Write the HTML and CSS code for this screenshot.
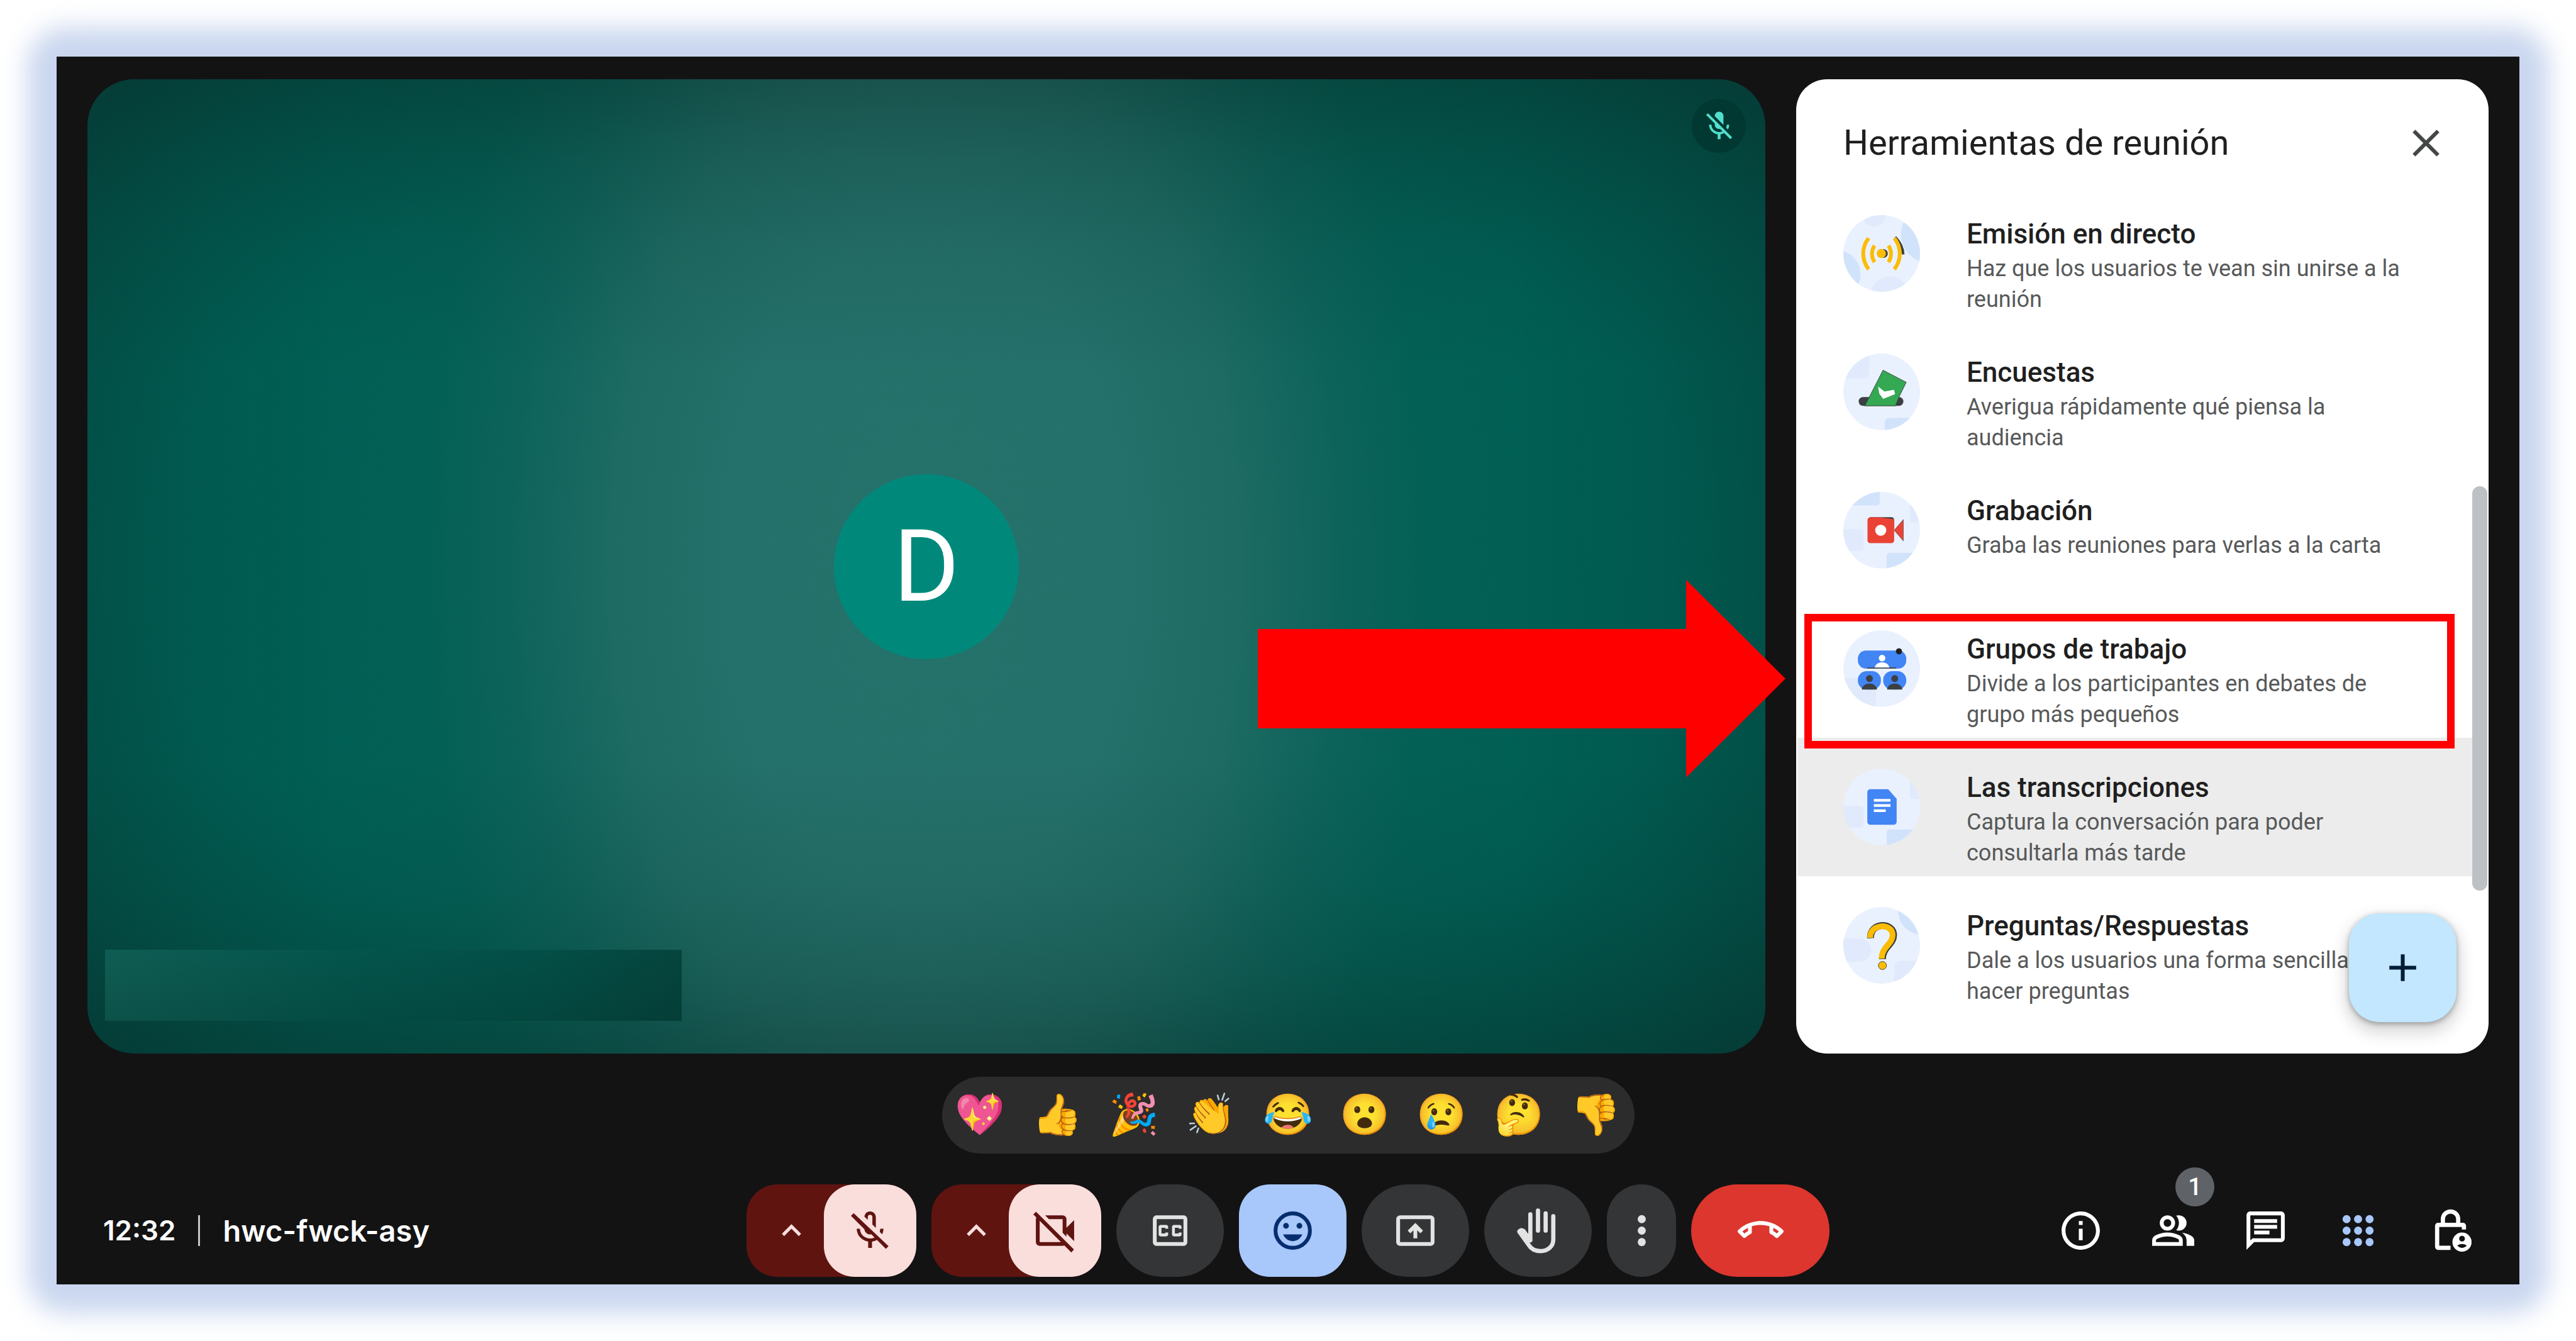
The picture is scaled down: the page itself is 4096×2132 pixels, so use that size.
FILE: index.html
```html
<!DOCTYPE html>
<html lang="es">
<head>
<meta charset="utf-8">
<meta name="viewport" content="width=device-width, initial-scale=1">
<title>Meet: hwc-fwck-asy</title>
<link rel="stylesheet" href="styles.css">
</head>
<body>
<div class="frame">
  <main class="stage">
    <section class="tile" aria-label="Participante">
      <span class="tile-mute">
        <svg viewBox="0 0 24 24" aria-hidden="true"><path d="M19 11h-1.700c0 .74-.16 1.430-.43 2.050l1.230 1.230c.56-.98.9-2.090.9-3.280zm-4.020.17c0-.06.02-.11.02-.17V5c0-1.660-1.340-3-3-3S9 3.340 9 5v.18l5.980 5.990zM4.270 3L3 4.270l6.010 6.010V11c0 1.660 1.330 3 2.990 3 .22 0 .44-.03.65-.08l1.660 1.660c-.71.33-1.500.52-2.310.52-2.760 0-5.300-2.100-5.300-5.100H5c0 3.410 2.720 6.230 6 6.720V21h2v-3.280c.91-.13 1.770-.45 2.540-.9L19.730 21 21 19.730 4.270 3z"/></svg>
      </span>
      <div class="avatar">D</div>
      <div class="name-cover"></div>
    </section>

    <aside class="panel">
      <header class="panel-head">
        <h1 class="panel-title">Herramientas de reunión</h1>
        <button class="close" type="button" aria-label="Cerrar">
          <svg viewBox="0 0 24 24" aria-hidden="true"><path d="M19 6.410L17.590 5 12 10.590 6.410 5 5 6.410 10.590 12 5 17.590 6.410 19 12 13.410 17.590 19 19 17.590 13.410 12z"/></svg>
        </button>
      </header>
      <ul class="tools">
        <li class="tool">
          <svg class="tool-icon" viewBox="0 0 40 40" aria-hidden="true">
            <circle cx="20" cy="20" r="20" fill="#eaf1fe"/>
            <g clip-path="url(#disc)">
              <circle cx="16" cy="0" r="6" fill="#e0eafc"/><circle cx="24" cy="42" r="10" fill="#e0eafc"/>
              <circle cx="45" cy="10" r="15" fill="#d1e3fb"/><circle cx="-4" cy="31" r="13" fill="#d1e3fb"/>
            </g>
            <path d="M27 11.500q4 4 4.200 9" fill="none" stroke="#3c4043" stroke-width="1.400"/>
            <circle cx="20.900" cy="20" r="2.300" fill="#3c4043"/><circle cx="19.800" cy="20" r="2.400" fill="#fbbc04"/>
            <path d="M13.200 12a13 13 0 0 0 0 16.200M16.300 15.900a7.500 7.500 0 0 0 0 8.600M26.600 12a13 13 0 0 1 0 16.200M23.500 15.900a7.500 7.500 0 0 1 0 8.600" fill="none" stroke="#fbbc04" stroke-width="2"/>
          </svg>
          <div class="tool-text"><h2>Emisión en directo</h2><p>Haz que los usuarios te vean sin unirse a la reunión</p></div>
        </li>
        <li class="tool">
          <svg class="tool-icon" viewBox="0 0 40 40" aria-hidden="true">
            <circle cx="20" cy="20" r="20" fill="#eaf1fe"/>
            <g clip-path="url(#disc)"><path d="M0 0h13.500v10a3 3 0 0 1-3 3H0z" fill="#e0eafc"/><path d="M21.500 40v-4a2.500 2.500 0 0 1 2.500-2.500h16V40z" fill="#d1e3fb"/></g>
            <rect x="8" y="22.700" width="23.300" height="4.600" rx="2.300" fill="#3c4043"/>
            <path d="M20.700 8.700l12.100 6.300-3.800 7.700-1.800 4.600H11.200z" fill="#34a853" stroke="#3c4043" stroke-width=".3"/>
            <path d="M18.500 17.800l2.900 2.300 4.800-.9.500 1.800-5.800 2.400-1.900-2.500z" fill="#fff" stroke="#fff" stroke-width=".5"/>
          </svg>
          <div class="tool-text"><h2>Encuestas</h2><p>Averigua rápidamente qué piensa la audiencia</p></div>
        </li>
        <li class="tool">
          <svg class="tool-icon" viewBox="0 0 40 40" aria-hidden="true">
            <circle cx="20" cy="20" r="20" fill="#eaf1fe"/>
            <g clip-path="url(#disc)"><path d="M0 0h19v5.500a1.600 1.600 0 0 1-1.600 1.600H0zM22.600 40v-6.700a1.600 1.600 0 0 1 1.600-1.600H40V40z" fill="#d1e3fb"/><path d="M0 19.400h9a1.600 1.600 0 0 1 1.600 1.600v8a1.800 1.800 0 0 1-1.800 1.800H0zM34.700 0H40v15.800h-4a1.300 1.300 0 0 1-1.300-1.300z" fill="#e0eafc"/></g>
            <rect x="13" y="13.200" width="13.500" height="6" rx="1.400" fill="#3c4043"/>
            <path d="M14 13.300h5l7.500 1v11a1.400 1.400 0 0 1-1.400 1.400H14a1.400 1.400 0 0 1-1.400-1.400V14.700A1.400 1.400 0 0 1 14 13.300z" fill="#ea4335"/>
            <path d="M31.300 14.400v11.200L26.500 20z" fill="#ea4335" stroke="#3c4043" stroke-width=".2"/><circle cx="19.500" cy="20" r="2.900" fill="#fff"/>
          </svg>
          <div class="tool-text"><h2>Grabación</h2><p>Graba las reuniones para verlas a la carta</p></div>
        </li>
        <li class="tool marked">
          <svg class="tool-icon" viewBox="0 0 40 40" aria-hidden="true">
            <circle cx="20" cy="20" r="20" fill="#eaf1fe"/>
            <g clip-path="url(#disc)"><path d="M0 24.800h15a2 2 0 0 1 2 2V40H0z" fill="#e0eafc"/></g>
            <rect x="7.600" y="10.600" width="25.200" height="9.400" rx="4.200" fill="#4285f4"/>
            <circle cx="29" cy="11" r="1.600"/><path d="M12.500 19.700h15" stroke="#3c4043" stroke-width=".6"/>
            <circle cx="20.200" cy="14.500" r="1.700" fill="#fff"/><path d="M16.400 19.400c.6-3.600 7-3.600 7.600 0z" fill="#fff"/>
            <rect x="7.600" y="21.300" width="12" height="9.600" rx="4.600" fill="#4285f4"/><rect x="20.800" y="21.300" width="12" height="9.600" rx="4.600" fill="#4285f4"/>
            <path d="M9.600 30.900c.4-4.200 7.600-4.200 8 0zM22.800 30.900c.4-4.200 7.600-4.200 8 0z" fill="#3c4043"/><circle cx="13.600" cy="25.200" r="1.800" fill="#3c4043"/><circle cx="26.800" cy="25.200" r="1.800" fill="#3c4043"/>
          </svg>
          <div class="tool-text"><h2>Grupos de trabajo</h2><p>Divide a los participantes en debates de grupo más pequeños</p></div>
          <svg class="arrow" viewBox="0 0 839 314" aria-hidden="true"><path d="M0 78h681V0l158 157-158 157v-78H0z" fill="#f00"/></svg>
        </li>
        <li class="tool hovered">
          <svg class="tool-icon" viewBox="0 0 40 40" aria-hidden="true">
            <circle cx="20" cy="20" r="20" fill="#eaf1fe"/>
            <g clip-path="url(#disc)"><path d="M22.600 40v-6.700a1.600 1.600 0 0 1 1.600-1.600H40V40z" fill="#d1e3fb"/><path d="M0 19.400h9a1.600 1.600 0 0 1 1.600 1.600v8a1.800 1.800 0 0 1-1.800 1.800H0zM34.700 0H40v15.800h-4a1.300 1.300 0 0 1-1.300-1.300z" fill="#e0eafc"/></g>
            <path d="M14.100 10.700h9.300l4.400 5v12a1.600 1.600 0 0 1-1.600 1.600H14.100a1.600 1.600 0 0 1-1.600-1.600V12.300a1.600 1.600 0 0 1 1.600-1.600z" fill="#4285f4"/>
            <path d="M15.900 16.500h8.700M15.900 19.200h8.700M15.900 21.900h6.200" stroke="#fff" stroke-width="1.400"/>
          </svg>
          <div class="tool-text"><h2>Las transcripciones</h2><p>Captura la conversación para poder consultarla más tarde</p></div>
        </li>
        <li class="tool">
          <svg class="tool-icon" viewBox="0 0 40 40" aria-hidden="true">
            <defs><clipPath id="disc"><circle cx="20" cy="20" r="20"/></clipPath></defs>
            <circle cx="20" cy="20" r="20" fill="#eaf1fe"/>
            <g clip-path="url(#disc)"><circle cx="41" cy="2" r="12.500" fill="#d1e3fb"/><rect x="-4" y="16.500" width="18.500" height="12" rx="6" fill="#e0eafc"/><path d="M26.500 40v-9a3 3 0 0 1 3-3H40v12z" fill="#e0eafc"/></g>
            <g fill="none"><path d="M14.200 16.300c-.6-8.400 12-8.700 12-1.600 0 5-5.800 6-5.800 12.500" stroke="#3c4043" stroke-width="3.600"/><path d="M14 16.100c-.4-7.600 11.700-8 11.700-1.500 0 4.900-5.700 6-5.700 12.400" stroke="#fbbc04" stroke-width="3"/></g>
            <circle cx="20.400" cy="30.500" r="2.100" fill="#fbbc04" stroke="#3c4043" stroke-width=".3"/>
          </svg>
          <div class="tool-text"><h2>Preguntas/Respuestas</h2><p>Dale a los usuarios una forma sencilla de hacer preguntas</p></div>
        </li>
      </ul>
      <div class="scroll-thumb"></div>
      <button class="fab" type="button" aria-label="Añadir"><svg viewBox="0 0 24 24" aria-hidden="true"><path d="M19 13h-6v6h-2v-6H5v-2h6V5h2v6h6v2z"/></svg></button>
    </aside>
  </main>

  <div class="reactions">
    <button type="button">💖</button><button type="button">👍</button><button type="button">🎉</button><button type="button">👏</button><button type="button">😂</button><button type="button">😮</button><button type="button">😢</button><button type="button">🤔</button><button type="button">👎</button>
  </div>

  <footer class="bar">
    <div class="meta"><span class="time">12:32</span><span class="rule"></span><span class="code">hwc-fwck-asy</span></div>
    <div class="controls">
      <div class="split">
        <button class="more-opts" type="button" aria-label="Ajustes de audio"><svg viewBox="0 0 24 24" aria-hidden="true"><path d="M12 8l-6 6 1.410 1.410L12 10.830l4.590 4.580L18 14z"/></svg></button>
        <button class="off" type="button" aria-label="Activar micrófono"><svg viewBox="0 0 24 24" aria-hidden="true"><path d="M10.800 4.900c0-.66.54-1.200 1.200-1.200s1.200.54 1.200 1.200l-.01 3.910L15 10.600V5c0-1.660-1.340-3-3-3-1.540 0-2.790 1.160-2.960 2.650l1.760 1.760V4.900zM19 11h-1.700c0 .58-.1 1.130-.27 1.640l1.270 1.270c.44-.88.7-1.870.7-2.910zM3.410 2.860L2 4.270l7 7c.2 1.500 1.400 2.730 3 2.730.23 0 .44-.03.65-.08l1.660 1.660c-.71.33-1.500.52-2.310.52-2.760 0-5.300-2.100-5.300-5.100H5c0 3.410 2.720 6.230 6 6.720V21h2v-3.280c.91-.13 1.770-.45 2.550-.9l4.700 4.700 1.410-1.410z"/></svg></button>
      </div>
      <div class="split">
        <button class="more-opts" type="button" aria-label="Ajustes de vídeo"><svg viewBox="0 0 24 24" aria-hidden="true"><path d="M12 8l-6 6 1.410 1.410L12 10.830l4.590 4.580L18 14z"/></svg></button>
        <button class="off" type="button" aria-label="Activar cámara"><svg viewBox="0 0 24 24" aria-hidden="true"><path d="m22 17.500-4-4v1.675L16 13.175V6H8.825l-2-2H16q.825 0 1.413.588T18 6v4.500l4-4v11ZM20.550 23.400.650 3.500 2.100 2.100l19.800 19.800-1.350 1.500ZM4 4l2 2H4v12h12v-2l2 2q0 .825-.587 1.413T16 20H4q-.825 0-1.412-.587T2 18V6q0-.825.588-1.412T4 4Z"/></svg></button>
      </div>
      <button class="ctl" type="button" aria-label="Subtítulos"><svg viewBox="0 0 24 24" aria-hidden="true"><path d="M19 4H5c-1.110 0-2 .9-2 2v12c0 1.100.89 2 2 2h14c1.100 0 2-.9 2-2V6c0-1.100-.9-2-2-2zm0 14H5V6h14v12zM7 15h3c.55 0 1-.45 1-1v-1H9.500v.5h-2v-3h2v.5H11v-1c0-.55-.45-1-1-1H7c-.55 0-1 .45-1 1v4c0 .55.45 1 1 1zm7 0h3c.55 0 1-.45 1-1v-1h-1.500v.5h-2v-3h2v.5H18v-1c0-.55-.45-1-1-1h-3c-.55 0-1 .45-1 1v4c0 .55.45 1 1 1z"/></svg></button>
      <button class="ctl active" type="button" aria-label="Reacciones" aria-pressed="true"><svg viewBox="0 0 24 24" aria-hidden="true"><circle cx="12" cy="12" r="9" fill="none" stroke="currentColor" stroke-width="2"/><circle cx="8.500" cy="9.500" r="1.500"/><circle cx="15.500" cy="9.500" r="1.500"/><path d="M7 14h10c-.8 2.050-2.700 3.500-5 3.500S7.800 16.050 7 14z"/></svg></button>
      <button class="ctl" type="button" aria-label="Presentar"><svg viewBox="0 0 24 24" aria-hidden="true"><path d="M20 4H4a2 2 0 0 0-2 2v12a2 2 0 0 0 2 2h16a2 2 0 0 0 2-2V6a2 2 0 0 0-2-2zm0 14H4V6h16z"/><path d="m12 8-4 4 1.400 1.400L11 11.850V16h2v-4.150l1.600 1.550L16 12z"/></svg></button>
      <button class="ctl" type="button" aria-label="Levantar la mano"><svg viewBox="0 0 24 24" aria-hidden="true"><path d="M8 17V3.500M12 12V1.500M16 12V3M20 4.500v12.200c0 3.600-2.900 6-6.700 6-2.900 0-4.900-1.100-6.200-3.300L2.200 12.500q.9-1.200 2.200-.3L8 17" fill="none" stroke="currentColor" stroke-width="2.200" stroke-linecap="round" stroke-linejoin="round"/></svg></button>
      <button class="ctl narrow" type="button" aria-label="Más opciones"><svg viewBox="0 0 24 24" aria-hidden="true"><circle cx="12" cy="6" r="2.100"/><circle cx="12" cy="12" r="2.100"/><circle cx="12" cy="18" r="2.100"/></svg></button>
      <button class="ctl end" type="button" aria-label="Salir de la llamada"><svg viewBox="0 0 24 24" aria-hidden="true"><path d="M18.590 10.520c1.050.51 2.040 1.150 2.960 1.910l-1.070 1.070c-.58-.47-1.210-.89-1.880-1.270v-1.710m-13.200 0v1.700c-.65.37-1.280.79-1.870 1.270l-1.070-1.070c.91-.75 1.900-1.380 2.940-1.900M12 7C7.460 7 3.340 8.780.29 11.670c-.18.18-.29.43-.29.71s.11.53.29.7l2.480 2.480c.18.18.43.29.71.29.27 0 .52-.1.7-.28.79-.73 1.680-1.360 2.660-1.850.33-.16.56-.51.56-.9v-3.100C8.850 9.250 10.400 9 12 9s3.150.25 4.590.73v3.100c0 .4.23.74.56.9.98.49 1.880 1.110 2.670 1.850.18.17.43.28.7.28.28 0 .53-.11.71-.29l2.480-2.480c.18-.18.29-.43.29-.71s-.11-.53-.29-.71C20.660 8.780 16.540 7 12 7z"/></svg></button>
    </div>
    <div class="side">
      <button type="button" aria-label="Detalles de la reunión"><svg viewBox="0 0 24 24" aria-hidden="true"><path d="M11 7h2v2h-2zm0 4h2v6h-2zm1-9C6.480 2 2 6.480 2 12s4.480 10 10 10 10-4.480 10-10S17.520 2 12 2zm0 18c-4.410 0-8-3.590-8-8s3.590-8 8-8 8 3.590 8 8-3.590 8-8 8z"/></svg></button>
      <button type="button" aria-label="Contactos"><svg viewBox="0 0 24 24" aria-hidden="true"><path d="M1 20v-2.800q0-.85.438-1.563T2.600 14.550q1.550-.775 3.150-1.163T9 13q1.650 0 3.250.388t3.150 1.162q.725.375 1.163 1.088T17 17.200V20H1Zm18 0v-3q0-1.100-.613-2.113T16.650 13.150q1.275.15 2.400.513t2.100.887q.9.500 1.375 1.112T23 17v3h-4ZM9 12q-1.650 0-2.825-1.175T5 8q0-1.650 1.175-2.825T9 4q1.650 0 2.825 1.175T13 8q0 1.650-1.175 2.825T9 12Zm10-4q0 1.650-1.175 2.825T15 12q-.275 0-.7-.063t-.7-.137q.675-.8 1.037-1.775T15 8q0-1.050-.362-2.025T13.600 4.200q.35-.125.7-.163T15 4q1.650 0 2.825 1.175T19 8ZM3 18h12v-.8q0-.275-.137-.5t-.363-.35q-1.350-.675-2.725-1.012T9 15q-1.400 0-2.775.338T3.500 16.350q-.225.125-.363.35T3 17.200v.8Zm6-8q.825 0 1.413-.588T11 8q0-.825-.587-1.413T9 6q-.825 0-1.412.588T7 8q0 .825.588 1.413T9 10Z"/></svg><span class="badge">1</span></button>
      <button type="button" aria-label="Chat"><svg viewBox="0 0 24 24" aria-hidden="true"><path d="M4 4h16v12H5.170L4 17.170V4m0-2c-1.100 0-1.990.9-1.990 2L2 22l4-4h14c1.100 0 2-.9 2-2V4c0-1.100-.9-2-2-2H4zm2 10h8v2H6v-2zm0-3h12v2H6V9zm0-3h12v2H6V6z"/></svg></button>
      <button class="on" type="button" aria-label="Herramientas de reunión"><svg viewBox="0 0 24 24" aria-hidden="true"><circle cx="6" cy="6" r="2.100"/><circle cx="12" cy="6" r="2.100"/><circle cx="18" cy="6" r="2.100"/><circle cx="6" cy="12" r="2.100"/><circle cx="12" cy="12" r="2.100"/><circle cx="18" cy="12" r="2.100"/><circle cx="6" cy="18" r="2.100"/><circle cx="12" cy="18" r="2.100"/><circle cx="18" cy="18" r="2.100"/></svg></button>
      <button type="button" aria-label="Controles del organizador"><svg viewBox="0 0 24 24" aria-hidden="true"><path d="M19 11.400V9.500a.500.500 0 0 0-.500-.500h-13a.500.500 0 0 0-.500.500v11a.500.500 0 0 0 .500.500H12M8 9V6a4 4 0 0 1 8 0v3" fill="none" stroke="currentColor" stroke-width="2.200"/><circle cx="18" cy="18" r="5"/><circle cx="18" cy="16.200" r="1.500" fill="#131314"/><path d="M15.500 19.800q2.500-1.600 5 0-2.500 2.500-5 0z" fill="#131314"/></svg></button>
    </div>
  </footer>
</div>
</body>
</html>
```
FILE: styles.css
```css
* { box-sizing: border-box; }
body {
  margin: 0;
  padding: 90px;
  background: #fff;
  font-family: Roboto, "Liberation Sans", sans-serif;
}
h1, h2, p, ul { margin: 0; padding: 0; }
ul { list-style: none; }
button {
  display: flex;
  align-items: center;
  justify-content: center;
  padding: 0;
  border: 0;
  background: none;
  color: inherit;
  font: inherit;
  cursor: pointer;
}
svg { display: block; fill: currentColor; }

/* Window with its soft blue glow */
.frame {
  position: relative;
  display: flex;
  flex-direction: column;
  min-height: calc(100vh - 180px);
  padding-bottom: 12px;
  background: #131314;
  color: #fff;
}
.frame::before {
  content: "";
  position: absolute;
  inset: -46px;
  z-index: -1;
  border-radius: 60px;
  background: #c9d6ef;
  filter: blur(20px);
}

.stage {
  flex: 1;
  display: flex;
  gap: 49px;
  padding: 36px 49px 0;
}

/* Video tile */
.tile {
  position: relative;
  flex: 1;
  display: grid;
  place-items: center;
  border-radius: 74px;
  background:
    radial-gradient(ellipse farthest-corner, rgba(8, 20, 20, 0) 65%, rgba(8, 20, 20, .14) 100%),
    linear-gradient(to right, rgba(12, 20, 20, .17), rgba(12, 20, 20, .07) 7%, rgba(12, 20, 20, 0) 15%, rgba(12, 20, 20, 0) 85%, rgba(12, 20, 20, .07) 93%, rgba(12, 20, 20, .17)),
    linear-gradient(rgba(12, 20, 20, .27), rgba(12, 20, 20, .16) 8%, rgba(12, 20, 20, .07) 17%, rgba(12, 20, 20, 0) 30%, rgba(12, 20, 20, 0) 70%, rgba(12, 20, 20, .07) 83%, rgba(12, 20, 20, .16) 92%, rgba(12, 20, 20, .27)),
    radial-gradient(ellipse 1000px 1650px, #25726b 0, #24706a 32%, #1d6b63 50%, #0d635a 66%, #036055 80%, #005f54 100%);
}
.tile-mute {
  position: absolute;
  top: 31px;
  right: 31px;
  display: grid;
  place-items: center;
  width: 86px;
  height: 86px;
  border-radius: 50%;
  background: #013832;
  color: #50dfcd;
}
.tile-mute svg { width: 55px; height: 55px; }
.avatar {
  display: grid;
  place-items: center;
  width: 294px;
  height: 294px;
  border-radius: 50%;
  background: #00897b;
  font-size: 160px;
  line-height: 1;
}
.name-cover {
  position: absolute;
  left: 28px;
  bottom: 52px;
  width: 917px;
  height: 113px;
  background:
    linear-gradient(rgba(0, 20, 15, 0), rgba(0, 20, 15, .15)),
    linear-gradient(to right, #0f5d54, #04554c 42%, #034f47 75%, #05453e);
}

/* Tools panel */
.panel {
  position: relative;
  width: 1101px;
  padding: 0 2px;
  border-radius: 49px;
  background: #fff;
  color: #1f1f1f;
}
.panel-head {
  display: flex;
  align-items: center;
  justify-content: space-between;
  height: 167px;
  padding: 36px 61px 0 73px;
}
.panel-title { font-size: 56px; line-height: 73px; font-weight: 400; }
.close { color: #444746; }
.close svg { width: 73px; height: 73px; }
.tools { padding-right: 24px; }
.tool {
  position: relative;
  display: flex;
  gap: 74px;
  height: 220px;
  padding: 49px 49px 0 73px;
}
.tool-icon { flex: none; width: 122px; height: 122px; }
.tool-text { width: 720px; }
.tool-text h2 { font-size: 44px; line-height: 61px; font-weight: 500; }
.tool-text p { font-size: 36px; line-height: 49px; color: #575959; }
.hovered { background: #ececec; }

/* Callout around one tool */
.marked { z-index: 1; }
.marked::after {
  content: "";
  position: absolute;
  inset: 23px 28px -17px 11px;
  border: 12px solid #f00;
}
.arrow {
  position: absolute;
  top: -31px;
  right: calc(100% + 19px);
  width: 839px;
  height: 314px;
}

.scroll-thumb {
  position: absolute;
  top: 647px;
  right: 2px;
  width: 24px;
  height: 643px;
  border-radius: 12px;
  background: #bdc1c6;
}
.fab {
  position: absolute;
  right: 51px;
  bottom: 50px;
  width: 171px;
  height: 173px;
  border-radius: 49px;
  background: #c2e7ff;
  color: #001d35;
  box-shadow: 0 3px 9px rgba(0, 0, 0, .3), 0 12px 24px 6px rgba(0, 0, 0, .15);
}
.fab svg { width: 73px; height: 73px; }

/* Reactions */
.reactions {
  display: flex;
  align-self: center;
  width: 1101px;
  height: 122px;
  margin-top: 37px;
  border-radius: 61px;
  background: #2c2c2c;
}
.reactions button {
  flex: 1;
  font: 64px/80px "Noto Color Emoji", sans-serif;
}

/* Bottom bar */
.bar {
  display: grid;
  grid-template-columns: 1fr auto 1fr;
  align-items: center;
  margin-top: 49px;
  padding: 0 36px 0 74px;
}
.meta {
  display: flex;
  align-items: center;
  gap: 36px;
  font-family: Inter, "Liberation Sans", sans-serif;
  font-weight: 600;
}
.time { font-size: 44px; line-height: 61px; }
.code { font-size: 47px; line-height: 61px; }
.rule { width: 3px; height: 49px; background: #c4c7c5; }
.controls { display: flex; gap: 24px; margin-left: -38px; }
.controls svg, .side svg { width: 73px; height: 73px; }
.split {
  display: flex;
  width: 270px;
  height: 147px;
  border-radius: 49px;
  background: #601410;
  color: #f9dedc;
}
.more-opts { flex: 1; padding-left: 20px; }
.controls .more-opts svg { width: 61px; height: 61px; }
.off {
  width: 147px;
  border-radius: 49px;
  background: #f9dedc;
  color: #601410;
}
.ctl {
  width: 171px;
  height: 147px;
  border-radius: 74px;
  background: #333537;
  color: #e3e3e3;
}
.active { border-radius: 49px; background: #a8c7fa; color: #062e6f; }
.narrow { width: 110px; }
.end { width: 220px; background: #dc362e; color: #fff; }
.side { display: flex; justify-content: flex-end; }
.side button { position: relative; width: 147px; height: 147px; }
.side .on { color: #a8c7fa; }
.badge {
  position: absolute;
  top: -27px;
  right: 8px;
  width: 62px;
  height: 62px;
  border-radius: 50%;
  background: #5f6368;
  font-size: 38px;
  line-height: 62px;
  font-weight: 500;
}
```
